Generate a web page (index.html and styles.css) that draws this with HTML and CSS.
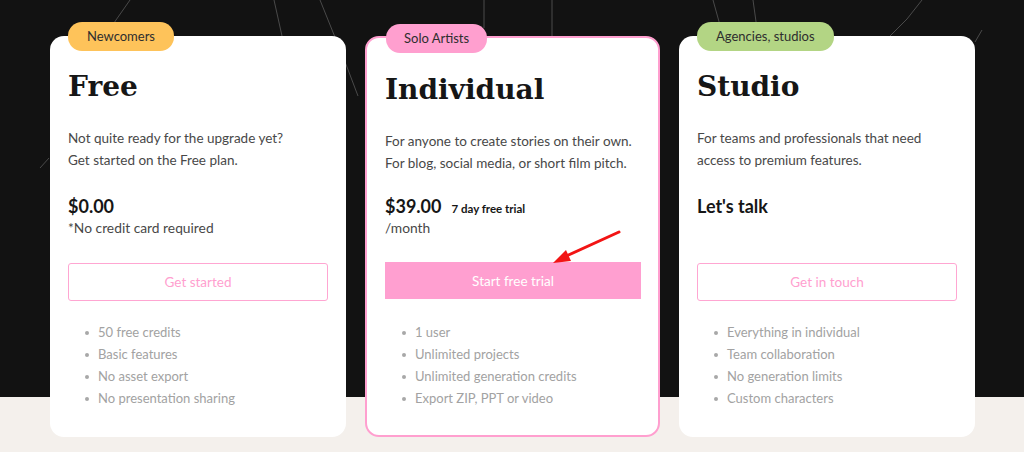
FILE: index.html
```html
<!DOCTYPE html>
<html lang="en">
<head>
<meta charset="utf-8">
<title>Pricing</title>
<link rel="stylesheet" href="styles.css">
</head>
<body>
<div class="page">
  <svg class="bg-lines" width="1024" height="396" viewBox="0 0 1024 396" aria-hidden="true">
    <path d="M130 0 L116 20 L92 56"/>
    <path d="M274 0 L282 36"/>
    <path d="M320 0 L347 67 L358 96"/>
    <path d="M484 0 L484 28"/>
    <path d="M552 0 L552 36"/>
    <path d="M713 0 L723 36"/>
    <path d="M753 0 L758 36"/>
    <path d="M922 0 Q908 20 890 36"/>
    <path d="M982 30 L975 42"/>
    <path d="M40 168 L49 158"/>
  </svg>

  <div class="plans">
    <section class="card">
      <span class="badge badge--yellow">Newcomers</span>
      <h2 class="title">Free</h2>
      <p class="desc">Not quite ready for the upgrade yet?<br>Get started on the Free plan.</p>
      <div class="price">
        <div class="price-main"><span class="amount">$0.00</span></div>
        <div class="price-sub">*No credit card required</div>
      </div>
      <a class="btn btn--outline" href="#">Get started</a>
      <ul class="features">
        <li>50 free credits</li>
        <li>Basic features</li>
        <li>No asset export</li>
        <li>No presentation sharing</li>
      </ul>
    </section>

    <section class="card card--featured">
      <span class="badge badge--pink">Solo Artists</span>
      <h2 class="title">Individual</h2>
      <p class="desc">For anyone to create stories on their own.<br>For blog, social media, or short film pitch.</p>
      <div class="price">
        <div class="price-main"><span class="amount">$39.00</span><span class="trial">7 day free trial</span></div>
        <div class="price-sub">/month</div>
      </div>
      <a class="btn btn--solid" href="#">Start free trial</a>
      <ul class="features">
        <li>1 user</li>
        <li>Unlimited projects</li>
        <li>Unlimited generation credits</li>
        <li>Export ZIP, PPT or video</li>
      </ul>
    </section>

    <section class="card">
      <span class="badge badge--green">Agencies, studios</span>
      <h2 class="title">Studio</h2>
      <p class="desc">For teams and professionals that need<br>access to premium features.</p>
      <div class="price">
        <div class="price-main"><span class="amount">Let's talk</span></div>
      </div>
      <a class="btn btn--outline" href="#">Get in touch</a>
      <ul class="features">
        <li>Everything in individual</li>
        <li>Team collaboration</li>
        <li>No generation limits</li>
        <li>Custom characters</li>
      </ul>
    </section>
  </div>

  <svg class="annot-arrow" width="90" height="45" viewBox="0 0 90 45" aria-hidden="true">
    <line x1="79" y1="7" x2="24" y2="32"/>
    <polygon points="13,38 31,36 26,25"/>
  </svg>
</div>
</body>
</html>
```

FILE: styles.css
```css
* {
  box-sizing: border-box;
}

html, body {
  margin: 0;
  padding: 0;
}

body {
  font-family: Lato, "Open Sans", Arial, sans-serif;
  background: #f4f0ec;
}

.page {
  position: relative;
  width: 1024px;
  height: 452px;
  overflow: hidden;
  background: linear-gradient(to bottom, #121212 0, #121212 397px, #f4f0ec 397px);
  padding-top: 36px;
}

.bg-lines {
  position: absolute;
  left: 0;
  top: 0;
  z-index: 0;
}

.bg-lines path {
  fill: none;
  stroke: #4a4a4a;
  stroke-width: 1;
}

.plans {
  position: relative;
  z-index: 1;
  display: grid;
  grid-template-columns: 296px 295px 296px;
  column-gap: 19px;
  margin-left: 50px;
}

.card {
  position: relative;
  background: #ffffff;
  border-radius: 14px;
  padding: 34px 18px 28px;
  display: flex;
  flex-direction: column;
}

.card--featured {
  border: 2px solid #ff9fcf;
  padding: 35px 17px 26px 18px;
}

.badge {
  position: absolute;
  top: -14px;
  left: 18px;
  height: 29px;
  line-height: 29px;
  padding: 0 19px;
  border-radius: 14px;
  font-size: 13px;
  color: #2e2e2e;
  white-space: nowrap;
}

.card--featured .badge {
  top: -14px;
  left: 19px;
}

.badge--yellow { background: #fec35a; }
.badge--pink { background: #ff9fcf; padding: 0 18px; }
.badge--green { background: #b3d584; }

.title {
  margin: 0 0 23px;
  font-family: "DejaVu Serif", "Liberation Serif", serif;
  font-weight: bold;
  font-size: 28px;
  line-height: 34px;
  color: #161616;
}

.desc {
  margin: 0 0 23px;
  font-size: 13.5px;
  line-height: 22px;
  color: #484848;
}

.card--featured .desc {
  margin-bottom: 20px;
}

.price {
  min-height: 44px;
  margin-bottom: 25px;
}

.card--featured .price {
  margin-bottom: 24px;
}

.price-main {
  display: flex;
  align-items: baseline;
  gap: 10px;
  height: 24px;
  line-height: 24px;
}

.amount {
  font-size: 18px;
  font-weight: bold;
  color: #161616;
}

.trial {
  font-size: 11.5px;
  font-weight: bold;
  color: #161616;
}

.price-sub {
  font-size: 13.8px;
  line-height: 20px;
  color: #484848;
}

.btn {
  display: flex;
  align-items: center;
  justify-content: center;
  height: 38px;
  font-size: 13.5px;
  text-decoration: none;
}

.btn--outline {
  border: 1.5px solid #ffa6d2;
  border-radius: 3px;
  color: #ff9fcf;
}

.btn--solid {
  height: 37px;
  background: #ff9fd0;
  color: #ffffff;
}

.features {
  list-style: none;
  margin: 20px 0 0;
  padding: 0;
}

.card--featured .features {
  margin-top: 22px;
}

.features li {
  position: relative;
  padding-left: 30px;
  font-size: 13px;
  line-height: 22px;
  color: #a2a2a2;
}

.features li::before {
  content: "";
  position: absolute;
  left: 17px;
  top: 10px;
  width: 4px;
  height: 4px;
  border-radius: 50%;
  background: #a8a8a8;
}

.annot-arrow {
  position: absolute;
  left: 540px;
  top: 225px;
  z-index: 2;
}

.annot-arrow line {
  stroke: #f21414;
  stroke-width: 3;
  stroke-linecap: round;
}

.annot-arrow polygon {
  fill: #f21414;
}
```
